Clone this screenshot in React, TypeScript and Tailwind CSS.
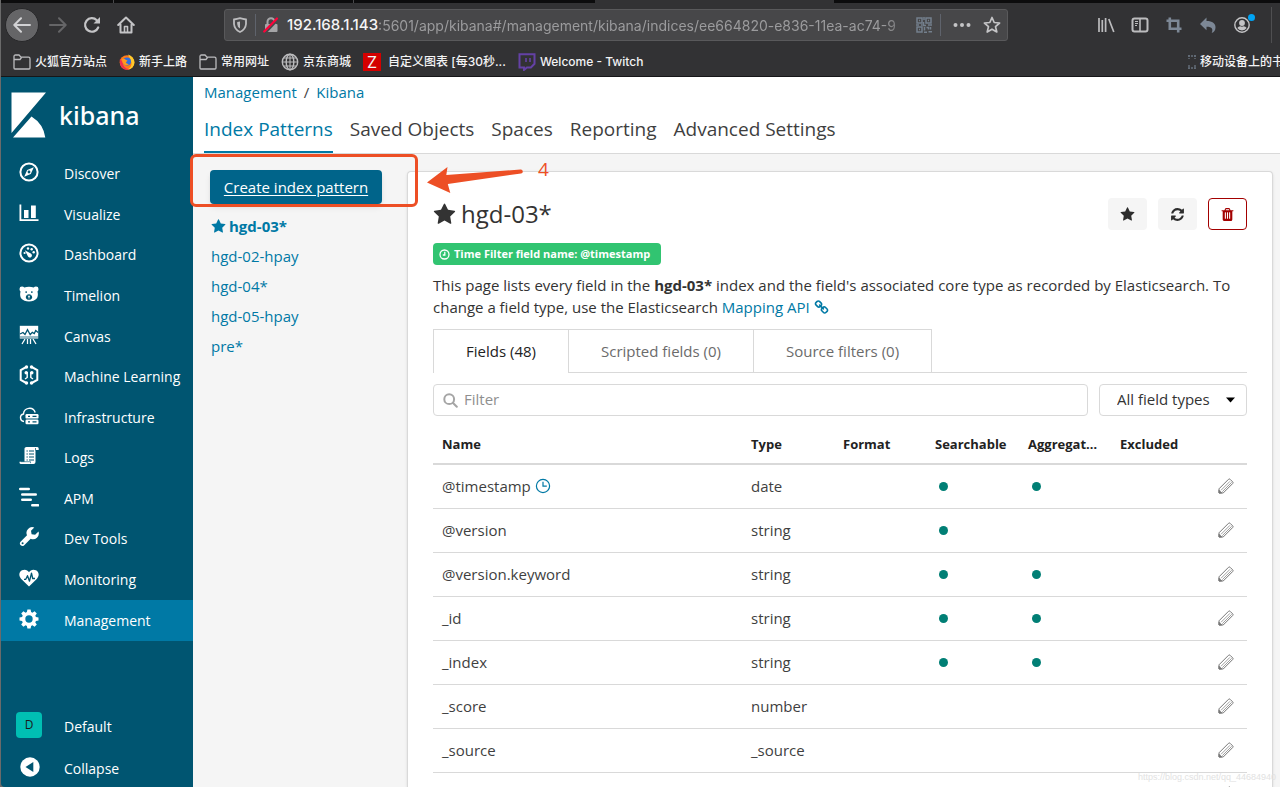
import type { ReactNode } from 'react'

interface Field {
  name: string
  type: string
  searchable?: boolean
  aggregatable?: boolean
  time?: boolean
}

const FIELDS: Field[] = [
  { name: '@timestamp', type: 'date', searchable: true, aggregatable: true, time: true },
  { name: '@version', type: 'string', searchable: true },
  { name: '@version.keyword', type: 'string', searchable: true, aggregatable: true },
  { name: '_id', type: 'string', searchable: true, aggregatable: true },
  { name: '_index', type: 'string', searchable: true, aggregatable: true },
  { name: '_score', type: 'number' },
  { name: '_source', type: '_source' },
  { name: '', type: '' },
]

const PATTERNS = ['hgd-02-hpay', 'hgd-04*', 'hgd-05-hpay', 'pre*']
const SECTIONS = ['Index Patterns', 'Saved Objects', 'Spaces', 'Reporting', 'Advanced Settings']
const TABS = ['Fields (48)', 'Scripted fields (0)', 'Source filters (0)']

// Font Awesome 4 glyphs, all on a 1792 grid
const FA = {
  star: 'M1728 647q0 22-26 48l-363 354 86 500q1 7 1 20 0 21-10.5 35.5t-30.5 14.5q-19 0-40-12l-449-236-449 236q-22 12-40 12-21 0-31.5-14.5t-10.5-35.5q0-6 2-20l86-500-364-354q-25-27-25-48 0-37 56-46l502-73 225-455q19-41 49-41t49 41l225 455 502 73q56 9 56 46z',
  refresh: 'M1639 1056q0 5-1 7-64 268-268 434.5t-478 166.5q-146 0-282.5-55t-243.5-157l-129 129q-19 19-45 19t-45-19-19-45v-448q0-26 19-45t45-19h448q26 0 45 19t19 45-19 45l-137 137q71 66 161 102t187 36q134 0 250-65t186-179q11-17 53-117 8-23 30-23h192q13 0 22.5 9.5t9.5 22.5zm25-800v448q0 26-19 45t-45 19h-448q-26 0-45-19t-19-45 19-45l138-138q-148-137-349-137-134 0-250 65t-186 179q-11 17-53 117-8 23-30 23h-199q-13 0-22.5-9.5t-9.5-22.5v-7q65-268 270-434.5t480-166.5q146 0 284 55.5t245 156.5l130-129q19-19 45-19t45 19 19 45z',
  trash: 'M704 1376v-704q0-14-9-23t-23-9h-64q-14 0-23 9t-9 23v704q0 14 9 23t23 9h64q14 0 23-9t9-23zm256 0v-704q0-14-9-23t-23-9h-64q-14 0-23 9t-9 23v704q0 14 9 23t23 9h64q14 0 23-9t9-23zm256 0v-704q0-14-9-23t-23-9h-64q-14 0-23 9t-9 23v704q0 14 9 23t23 9h64q14 0 23-9t9-23zm-544-992h448l-48-117q-7-9-17-11h-317q-10 2-17 11zm928 32v64q0 14-9 23t-23 9h-96v948q0 83-47 143.5t-113 60.5h-832q-66 0-113-58.5t-47-141.5v-952h-96q-14 0-23-9t-9-23v-64q0-14 9-23t23-9h309l70-167q15-37 54-63t79-26h320q40 0 79 26t54 63l70 167h309q14 0 23 9t9 23z',
  link: 'M1520 1216q0-40-28-68l-208-208q-28-28-68-28-42 0-72 32 3 3 19 18.5t21.5 21.5 15 19 13 25.5 3.5 27.5q0 40-28 68t-68 28q-15 0-27.5-3.5t-25.5-13-19-15-21.5-21.5-18.5-19q-33 31-33 73 0 40 28 68l206 207q27 27 68 27 40 0 68-26l147-146q28-28 28-67zm-703-705q0-40-28-68l-206-207q-28-28-68-28-39 0-68 27l-147 146q-28 28-28 67 0 40 28 68l208 208q27 27 68 27 42 0 72-31-3-3-19-18.5t-21.5-21.5-15-19-13-25.5-3.5-27.5q0-40 28-68t68-28q15 0 27.5 3.5t25.5 13 19 15 21.5 21.5 18.5 19q33-31 33-73zm895 705q0 120-85 203l-147 146q-83 83-203 83-121 0-204-85l-206-207q-83-83-83-203 0-123 88-209l-88-88q-86 88-208 88-120 0-204-84l-208-208q-84-84-84-204t85-203l147-146q83-83 203-83 121 0 204 85l206 207q83 83 83 203 0 123-88 209l88 88q86-88 208-88 120 0 204 84l208 208q84 84 84 204z',
}

function Fa({ d, className }: { d: string; className: string }) {
  return (
    <svg className={className} viewBox="0 0 1792 1792" fill="currentColor" aria-hidden="true">
      <path d={d} />
    </svg>
  )
}

function NavIcon({ children }: { children: ReactNode }) {
  return (
    <svg className="w-5 h-5 shrink-0 text-white" viewBox="0 0 20 20" fill="currentColor" aria-hidden="true">
      {children}
    </svg>
  )
}

const NAV: { label: string; icon: ReactNode }[] = [
  {
    label: 'Discover',
    icon: (
      <>
        <circle cx="10" cy="10" r="8.6" fill="none" stroke="currentColor" strokeWidth="2" />
        <path fillRule="evenodd" d="M14.8 5.2 11.8 12 5.2 14.8 8.2 8.1zM10 8.6a1.4 1.4 0 1 0 0 2.8 1.4 1.4 0 0 0 0-2.8z" />
      </>
    ),
  },
  { label: 'Visualize', icon: <path d="M.5 1.5h1.8V16.2h17.2V18H.5zM5 7h4.5v8H5zM12 2.5h4.8V15H12z" /> },
  {
    label: 'Dashboard',
    icon: (
      <>
        <circle cx="10" cy="10" r="8.6" fill="none" stroke="currentColor" strokeWidth="2" />
        <path d="M5.8 7.2 11.8 10.5a2.1 2.1 0 1 1-2.9 2.7z" />
        <circle cx="9" cy="5.5" r="1.2" />
        <circle cx="12.7" cy="6.3" r="1.2" />
        <circle cx="14.7" cy="9.2" r="1.2" />
        <circle cx="5.6" cy="10" r="1.1" />
      </>
    ),
  },
  {
    label: 'Timelion',
    icon: (
      <path
        fillRule="evenodd"
        d="M.5 5Q.5 2.6 3 2.6q1.400 0 2.300 1Q10 1.700 14.700 3.600q.9-1 2.300-1 2.500 0 2.500 2.400 0 1.600-1 2.500 1 4.500-.8 7Q15 17.500 10 17.500t-7.700-3q-1.800-2.500-.8-7-1-.9-1-2.500zM6.500 7.200v1.800h1.300V7.200zM12.200 7.200v1.800h1.300V7.200zM10 10.200c-2 0-3.200 1.500-3.200 3S8 15.800 10 15.800s3.200-1.100 3.200-2.600-1.200-3-3.200-3zM8.600 11.800h2.800L10.500 13v1.400h-1V13z"
      />
    ),
  },
  {
    label: 'Canvas',
    icon: (
      <>
        <path d="M.8.8h18.400v12.700H.8z" />
        <path d="m1 9 3-1.500 2 2 2.500-4.800 2.700 5 2.100-2.300 2 1.200 1.400-3 2.500 2" fill="none" stroke="#005571" strokeWidth="1.3" />
        <path d="M.8 12h18.400" stroke="#005571" strokeWidth=".8" />
        <path d="m6 14-3 5M8.500 14v5M11.500 14v5M14 14l3 5" fill="none" stroke="currentColor" strokeWidth="1.3" />
      </>
    ),
  },
  {
    label: 'Machine Learning',
    icon: (
      <>
        <path d="M7.300 2 1.700 5v10l5.600 3M12.700 2l5.600 3v10l-5.600 3" fill="none" stroke="currentColor" strokeWidth="2" />
        <path d="M8.200 7v5.500L6 14M11.800 7v5.500L14 14" fill="none" stroke="currentColor" strokeWidth="1.4" />
        <circle cx="7.500" cy="2" r="1.700" />
        <circle cx="12.500" cy="2" r="1.700" />
        <circle cx="7.500" cy="18" r="1.700" />
        <circle cx="12.500" cy="18" r="1.700" />
        <circle cx="7.200" cy="7.800" r="1.700" />
        <circle cx="12.800" cy="7.800" r="1.700" />
      </>
    ),
  },
  {
    label: 'Infrastructure',
    icon: (
      <>
        <path d="M5 15.500a3.800 3.800 0 0 1-.5-7.500 6 6 0 0 1 11.700-1.500" fill="none" stroke="currentColor" strokeWidth="1.4" />
        <rect x="6.500" y="8" width="13" height="4.600" rx="1.200" />
        <rect x="6.500" y="13.600" width="13" height="4.600" rx="1.200" />
        <path d="M9 10.300h2M13.500 10.300h4M9 15.900h2M13.500 15.900h4" stroke="#005571" strokeWidth="1.2" />
      </>
    ),
  },
  {
    label: 'Logs',
    icon: (
      <>
        <path d="M5.500 2.500Q5.500 1 7.500 1h10.800q1.400 0 1.400 1.500V4h-3.200v12q0 2-2 2H2.200Q.5 18 .5 16.500V15.800h5z" />
        <path d="M7.500 5h1.300M10 5h5M7.500 8h1.300M10 8h5M7.500 11h1.300M10 11h5M7.500 14h1.300M10 14h5" stroke="#005571" strokeWidth="1" />
        <path d="M16.500 2v2.500" stroke="#005571" strokeWidth=".7" />
        <path d="M2 15.700h9.500v1.500" fill="none" stroke="#005571" strokeWidth=".6" />
      </>
    ),
  },
  {
    label: 'APM',
    icon: (
      <path d="M1.300 2h8.400M3.300 7.500h13.400M3.300 12.800h8.400M13.300 18.200h5.700" fill="none" stroke="currentColor" strokeWidth="2.6" strokeLinecap="round" />
    ),
  },
  {
    label: 'Dev Tools',
    icon: (
      <path
        fillRule="evenodd"
        d="M19.500 4.500a5.800 5.800 0 0 1-7.800 7.200L5 18.500A2.600 2.600 0 0 1 1.300 15L8 8.300A5.800 5.800 0 0 1 15.300.5L12 3.800l.6 3.500 3.500.5zM2.600 16.200a1 1 0 1 0 2 0 1 1 0 0 0-2 0z"
      />
    ),
  },
  {
    label: 'Monitoring',
    icon: (
      <>
        <path d="M10 18.500 2 10.700C-.8 7.500.2 3.500 3 2.300 6 1 8.600 2 10 4.200 11.400 2 14 1 17 2.300c2.800 1.200 3.800 5.200 1 8.400z" />
        <path d="M5 11.300h1.800l1.700-3.600 2 5.500 2-8 1.200 5.300H16" fill="none" stroke="#005571" strokeWidth="1.3" strokeLinejoin="round" />
      </>
    ),
  },
  {
    label: 'Management',
    icon: (
      <path
        fillRule="evenodd"
        d="m8.400.5h3.200l.5 2.600 1.300.6L15.600 2.200 17.800 4.400 16.300 6.600l.6 1.300 2.600.5v3.200l-2.600.5-.6 1.300 1.500 2.200-2.200 2.200-2.200-1.500-1.300.6-.5 2.600H8.400l-.5-2.600-1.300-.6-2.200 1.500-2.200-2.200 1.500-2.200-.6-1.300-2.600-.5V8.400l2.600-.5.6-1.300L2.200 4.400 4.400 2.200l2.200 1.500 1.300-.6zM10 6.300a3.700 3.700 0 1 0 0 7.400 3.700 3.700 0 0 0 0-7.400z"
      />
    ),
  },
]

function FolderIcon() {
  return (
    <svg className="w-[18px] h-4 shrink-0" viewBox="0 0 18 16" fill="none" stroke="#bcbcbe" strokeWidth="1.3" aria-hidden="true">
      <path d="M1 14V2.500Q1 1 2.500 1H6l2 2.200h7.500Q17 3.200 17 4.700V14q0 1-1 1H2q-1 0-1-1zM1 5.500h6l1.500-2" />
    </svg>
  )
}

function FirefoxIcon() {
  return (
    <svg className="w-4 h-4 shrink-0" viewBox="0 0 16 16" aria-hidden="true">
      <circle cx="8" cy="8.500" r="7.300" fill="#ff7a1a" />
      <path d="M9 .5q6 2 6.500 8a7.400 7.400 0 0 1-7 7.300Q13 13 12.500 8.500 11 4 9 .5z" fill="#ffca2b" />
      <path d="M1 4.500Q0 12 4.500 14.800q3.500 1.500 6 .5Q4 14.500 3.500 8z" fill="#f0304f" />
      <circle cx="8" cy="7.500" r="4" fill="#2f6fe0" />
      <path d="M3 5q2.500-.6 4 1l1.500.4q-.2 1.400-1.700 1.600Q7 10 10 10.300 7 12.500 4.500 10 3 8 3 5z" fill="#ff9a1e" />
    </svg>
  )
}

function GlobeIcon() {
  return (
    <svg className="w-[18px] h-[18px] shrink-0" viewBox="0 0 18 18" fill="none" stroke="#bcbcbe" strokeWidth="1.4" aria-hidden="true">
      <circle cx="9" cy="9" r="7.700" />
      <ellipse cx="9" cy="9" rx="3.800" ry="7.700" />
      <path d="M1.300 9h15.400M2.600 5h12.800M2.600 13h12.800M9 1.300v15.400" strokeWidth="1.1" />
    </svg>
  )
}

function TwitchIcon() {
  return (
    <svg className="w-[18px] h-[18px] shrink-0" viewBox="0 0 18 18" fill="none" stroke="#6441a5" aria-hidden="true">
      <path d="M1.500 1.200h15v9.600l-3.600 3.700h-4L6 17v-2.500H1.500z" strokeWidth="2" />
      <path d="M8 5v4M12 5v4" strokeWidth="1.6" />
    </svg>
  )
}

function AddressBar() {
  return (
    <div className="flex h-8 min-w-0 flex-1 items-center rounded-[3px] border border-[#59595b] bg-[#474749] pl-[7px] pr-1.5">
      <button aria-label="Tracking protection">
        <svg className="w-4 h-4" viewBox="0 0 16 16" fill="none" stroke="#bcbcbe" aria-hidden="true">
          <path d="M8 1.200Q11 2 14 2.500v4.500Q13.500 12.500 8 15 2.500 12.500 2 7V2.500Q5 2 8 1.200z" strokeWidth="1.8" />
          <path d="M8 4.500v7Q5.300 10 5.200 7V5z" fill="#bcbcbe" stroke="none" />
        </svg>
      </button>
      <span className="mx-[7px] h-[22px] w-px bg-[#5f636c]" />
      <button aria-label="Site security">
        <svg className="w-4 h-4" viewBox="0 0 16 16" aria-hidden="true">
          <path d="M4.500 7V4.800a3.500 3.500 0 0 1 7 0V7" fill="none" stroke="#a5a5a7" strokeWidth="2" />
          <rect x="2" y="7" width="12.500" height="8" rx="1" fill="#a5a5a7" />
          <path d="M2.500 15.800 15.500 2" stroke="#474749" strokeWidth="2.2" />
          <path d="M1.200 14.500 14 1.500" stroke="#ff0039" strokeWidth="2.2" strokeLinecap="round" />
        </svg>
      </button>
      <label htmlFor="url" className="ml-2 pt-0.5 text-[15px] font-medium text-[#f5f5f6]">192.168.1.143</label>
      <input
        id="url"
        type="text"
        defaultValue=":5601/app/kibana#/management/kibana/indices/ee664820-e836-11ea-ac74-9"
        className="min-w-0 flex-1 bg-transparent pt-0.5 text-[14px] text-[#9b9b9d] outline-none [mask-image:linear-gradient(to_right,black_94%,transparent)]"
      />
      <button aria-label="QR code">
        <svg className="w-4 h-4" viewBox="0 0 16 16" fill="none" stroke="#74808d" strokeWidth="1.5" aria-hidden="true">
          <path d="M1 1h5v5H1zM10 1h5v5h-5zM1 10h5v5H1z" />
          <path d="M3 3.500h1M12 3.500h1M3 12.500h1M8 0v3M7.500 5v3.500H10M0 8h3M5 8h1.500M12 8h4M8.500 10v3.500M8 15.200h3M10.500 10.500h2v2M14.500 10v2.500M12.500 14.800H16" />
        </svg>
      </button>
      <span className="ml-2 mr-3 h-[22px] w-px bg-[#5f636c]" />
      <button aria-label="Page actions">
        <svg className="w-[18px] h-4" viewBox="0 0 18 16" fill="#c4c4c6" aria-hidden="true">
          <circle cx="2.500" cy="8" r="2" />
          <circle cx="9" cy="8" r="2" />
          <circle cx="15.500" cy="8" r="2" />
        </svg>
      </button>
      <button aria-label="Bookmark this page" className="ml-3">
        <svg className="w-[18px] h-[18px]" viewBox="0 0 18 18" fill="none" stroke="#c4c4c6" strokeWidth="1.7" strokeLinejoin="round" aria-hidden="true">
          <path d="m9 1.500 2.200 5 5.400.5-4.100 3.600 1.300 5.400L9 13.200 4.200 16l1.300-5.400L1.400 7l5.400-.5z" />
        </svg>
      </button>
    </div>
  )
}

function Browser() {
  return (
    <header className="shrink-0 border-b border-[#161618] bg-[#323234] font-[Inter,'Noto_Sans_CJK_SC',sans-serif]">
      <div className="flex h-[3px] bg-[#0c0c0d]">
        <span className="w-[113px] border-r border-[#4a4a4c]" />
        <span className="w-[240px] border-r border-[#4a4a4c]" />
        <span className="w-[241px]" />
        <span className="w-[239px] bg-[#323234]" />
      </div>
      <div className="flex h-[43px] items-center">
        <div className="flex w-[223px] shrink-0 items-center">
          <button aria-label="Back" className="ml-1 flex h-[34px] w-[34px] items-center justify-center rounded-full border border-[#28282a] bg-[#656567]">
            <svg className="w-[18px] h-[18px]" viewBox="0 0 18 18" fill="none" stroke="#d2d2d4" strokeWidth="2" strokeLinecap="round" strokeLinejoin="round" aria-hidden="true">
              <path d="M17 9H1.500M8 2.300 1.300 9 8 15.700" />
            </svg>
          </button>
          <button aria-label="Forward" className="ml-[10px]">
            <svg className="w-[18px] h-[18px]" viewBox="0 0 18 18" fill="none" stroke="#656567" strokeWidth="2" strokeLinecap="round" strokeLinejoin="round" aria-hidden="true">
              <path d="M1 9h15.500M10 2.300 16.700 9 10 15.700" />
            </svg>
          </button>
          <button aria-label="Reload" className="ml-4">
            <svg className="w-[18px] h-[18px]" viewBox="0 0 18 18" fill="none" stroke="#c4c4c6" strokeWidth="2.2" strokeLinecap="round" aria-hidden="true">
              <path d="M15.200 11.500A6.800 6.800 0 1 1 13.800 4.200" />
              <path d="M17 1v6.500h-6.500z" fill="#c4c4c6" stroke="none" />
            </svg>
          </button>
          <button aria-label="Home" className="ml-4">
            <svg className="w-[18px] h-[18px]" viewBox="0 0 18 18" fill="none" stroke="#c4c4c6" strokeWidth="2" strokeLinecap="round" strokeLinejoin="round" aria-hidden="true">
              <path d="M1.200 9 9 1.500 16.800 9M3.500 8.500v8h11v-8" />
              <path d="M7.500 16v-5.500h3V16" strokeWidth="1.6" />
            </svg>
          </button>
        </div>
        <AddressBar />
        <div className="flex w-[272px] shrink-0 items-center justify-end">
          <button aria-label="Library">
            <svg className="w-[18px] h-[18px]" viewBox="0 0 18 18" fill="none" stroke="#bcbcbe" strokeWidth="1.7" aria-hidden="true">
              <path d="M2 2v14M5.300 4v12M8.600 2v14M11.800 3l5 13" />
            </svg>
          </button>
          <button aria-label="Sidebars" className="ml-4">
            <svg className="w-[18px] h-[18px]" viewBox="0 0 18 18" fill="none" stroke="#bcbcbe" aria-hidden="true">
              <rect x="1.500" y="2.500" width="15" height="13" rx="2" strokeWidth="2" />
              <path d="M9 3v12" strokeWidth="1.6" />
              <path d="M4 5.500h3M4 7.500h3M4 9.500h2" strokeWidth="1" />
            </svg>
          </button>
          <button aria-label="Screenshot" className="ml-4">
            <svg className="w-[18px] h-[18px]" viewBox="0 0 18 18" fill="none" stroke="#7d8896" strokeWidth="2.6" aria-hidden="true">
              <path d="M4.800 1.500v11.200H16.500M1.500 4.800h11.700V16.500" />
            </svg>
          </button>
          <button aria-label="Undo" className="ml-4">
            <svg className="w-[18px] h-[18px]" viewBox="0 0 18 18" fill="#7d8896" aria-hidden="true">
              <path d="M7.500 1.500v3.600c6 0 9 2.600 9 6.400 0 2.800-1.500 4.700-3.800 5.500 1.500-3.800.8-6.300-5.200-6.300v3.600L1 7.900z" />
            </svg>
          </button>
          <button aria-label="Account" className="relative ml-4 mr-5">
            <svg className="w-[18px] h-[18px]" viewBox="0 0 18 18" fill="#c4c4c6" aria-hidden="true">
              <circle cx="9" cy="9" r="7.200" fill="none" stroke="#c4c4c6" strokeWidth="1.4" />
              <circle cx="9" cy="7" r="2.900" />
              <path d="M4.300 12q1.200-1.600 3-1.700 1.700.8 3.400 0 1.800.1 3 1.700-1.500 2.300-4.700 2.400-3.200-.1-4.700-2.400z" />
            </svg>
            <span className="absolute -right-1 -top-0.5 h-[7px] w-[7px] rounded-full bg-[#00a4f5]" />
          </button>
          <span className="mr-2 h-9 w-px bg-[#4f4f51]" />
        </div>
      </div>
      <nav className="flex h-[30px] items-center overflow-hidden whitespace-nowrap pl-3 pt-px text-xs font-medium text-[#f3f3f4]">
        <a href="#" className="flex items-center gap-1"><FolderIcon />火狐官方站点</a>
        <a href="#" className="ml-3 flex items-center gap-1"><FirefoxIcon />新手上路</a>
        <a href="#" className="ml-3 flex items-center gap-1"><FolderIcon />常用网址</a>
        <a href="#" className="ml-3 flex items-center gap-1"><GlobeIcon />京东商城</a>
        <a href="#" className="ml-3 flex items-center gap-[7px]">
          <span className="flex h-[18px] w-[18px] items-center justify-center bg-[#d40000] text-base font-normal">Z</span>
          自定义图表 [每30秒...
        </a>
        <a href="#" className="ml-3 flex items-center gap-1"><TwitchIcon />Welcome - Twitch</a>
        <a href="#" className="-mr-4 ml-auto flex items-center gap-1">
          <svg className="w-2 h-4" viewBox="0 0 8 16" fill="none" stroke="#66707c" strokeWidth="1.4" strokeDasharray="2 1" aria-hidden="true">
            <path d="M0 2h8M0 14h8M1 1v4M7 1v4M1 11v4M7 11v4" />
          </svg>
          移动设备上的书签
        </a>
      </nav>
    </header>
  )
}

function Sidebar() {
  return (
    <aside className="flex w-48 shrink-0 flex-col rounded-bl bg-[#005571] text-sm text-white">
      <a href="#" className="flex h-[77px] items-center gap-[13px] pb-0.5 pl-[10px]" aria-label="Kibana home">
        <svg className="h-[46px] w-[35px]" viewBox="0 0 35 46" fill="white" aria-hidden="true">
          <path d="M.5.5H35L.5 41zM2 45.500 20.500 24.500Q32.500 32 34.300 45.500z" />
        </svg>
        <span className="text-[25px] font-medium leading-9 font-['Noto_Sans',sans-serif]">kibana</span>
      </a>
      <nav className="flex h-[487px] flex-col">
        {NAV.map(item => (
          <a
            key={item.label}
            href="#"
            className={`flex flex-1 items-center gap-[25px] pl-[18px] ${item.label === 'Management' ? 'bg-[#0079a5]' : ''}`}
          >
            <span className="pb-1"><NavIcon>{item.icon}</NavIcon></span>
            {item.label}
          </a>
        ))}
      </nav>
      <a href="#" className="mt-auto flex h-12 items-center gap-[22px] pl-[15px]">
        <span className="mb-1 flex h-[26px] w-[26px] items-center justify-center rounded bg-[#00bfb3] text-xs text-[#1a1a1a]">D</span>
        Default
      </a>
      <button className="flex h-9 items-center gap-6 pl-[19px] text-left">
        <span className="pb-1">
          <NavIcon>
            <circle cx="10" cy="10" r="9.700" />
            <path d="M13.300 5v10L5.500 10z" fill="#005571" />
          </NavIcon>
        </span>
        Collapse
      </button>
    </aside>
  )
}

function PencilIcon() {
  return (
    <svg className="w-4 h-4" viewBox="0 0 16 16" fill="none" stroke="#777" strokeWidth="1" strokeLinejoin="round" aria-hidden="true">
      <path d="M1 10.800 10.500 1.300q.8-.8 1.600 0l2.600 2.600q.8.8 0 1.600L5.200 15H1z" />
      <path d="M3 12.300 12 3.300M4.300 13.700 13.700 4.300" strokeWidth=".7" />
      <path d="M1 12.300 3.700 15H1z" fill="#777" />
    </svg>
  )
}

function Dot({ label }: { label: string }) {
  return <span role="img" aria-label={label} className="ml-1 block h-[9px] w-[9px] rounded-full bg-[#017f75]" />
}

function FieldTable() {
  return (
    <table className="mt-[9px] w-full table-fixed text-left text-[15px] text-[#3f3f3f]">
      <thead>
        <tr className="h-[39px] border-b-2 border-[#d9d9d9] text-[13px] text-[#222]">
          <th className="px-[9px] pt-0.5">Name</th>
          <th className="w-[92px] px-[9px] pt-0.5">Type</th>
          <th className="w-[92px] px-[9px] pt-0.5">Format</th>
          <th className="w-[93px] px-[9px] pt-0.5">Searchable</th>
          <th className="w-[92px] truncate px-[9px] pt-0.5">Aggregatable</th>
          <th className="w-[93px] px-[9px] pt-0.5">Excluded</th>
          <th className="w-[43px]" aria-label="Actions" />
        </tr>
      </thead>
      <tbody>
        {FIELDS.map(field => (
          <tr key={field.name} className="h-11 border-b border-[#d9d9d9]">
            <td className="px-[9px]">
              <span className="flex items-center gap-1">
                {field.name}
                {field.time && (
                  <svg className="w-4 h-4" viewBox="0 0 16 16" fill="none" stroke="#0079a5" strokeWidth="1.2" aria-label="Time field">
                    <circle cx="8" cy="8" r="6.600" />
                    <path d="M8 3.800V8.200h3.800" />
                  </svg>
                )}
              </span>
            </td>
            <td className="px-[9px]">{field.type}</td>
            <td />
            <td className="px-[9px]">{field.searchable && <Dot label="Searchable" />}</td>
            <td className="px-[9px]">{field.aggregatable && <Dot label="Aggregatable" />}</td>
            <td />
            <td>
              <button aria-label={`Edit ${field.name}`} className="ml-[14px] block"><PencilIcon /></button>
            </td>
          </tr>
        ))}
      </tbody>
    </table>
  )
}

function IndexPattern() {
  return (
    <section className="mr-[7px] mt-[17px] min-w-0 flex-1 rounded-t border border-b-0 border-[#d9d9d9] bg-white px-[25px] pt-6 text-[#333] shadow-sm">
      <div className="flex items-start justify-between">
        <h1 className="flex h-9 items-center gap-[5px] text-2xl">
          <Fa d={FA.star} className="w-[23px] h-[23px]" />
          hgd-03*
        </h1>
        <div className="flex gap-[11px] pt-0.5">
          <button aria-label="Set as default index" className="flex h-8 w-[39px] items-center justify-center rounded bg-[#f5f5f5] text-[#2d2d2d]">
            <Fa d={FA.star} className="w-[15px] h-[15px]" />
          </button>
          <button aria-label="Refresh field list" className="flex h-8 w-[39px] items-center justify-center rounded bg-[#f5f5f5] text-[#2d2d2d]">
            <Fa d={FA.refresh} className="w-[15px] h-[15px]" />
          </button>
          <button aria-label="Remove index pattern" className="flex h-8 w-[39px] items-center justify-center rounded border border-[#a30000] text-[#a30000]">
            <Fa d={FA.trash} className="w-[15px] h-[15px]" />
          </button>
        </div>
      </div>
      <p className="mt-[11px] flex h-[22px] w-fit items-center gap-1 rounded-sm bg-[#31c471] pl-[6px] pr-[11px] text-[11px] font-bold text-white">
        <svg className="w-[11px] h-[11px]" viewBox="0 0 11 11" fill="none" stroke="currentColor" strokeWidth="1.3" aria-hidden="true">
          <circle cx="5.500" cy="5.500" r="4.500" />
          <path d="M5.800 2.800V6H3.800" />
        </svg>
        Time Filter field name: @timestamp
      </p>
      <p className="mt-[9px] text-[15px] leading-[22px]">
        This page lists every field in the <b>hgd-03*</b> index and the field's associated core type as recorded by Elasticsearch. To change a field type, use the Elasticsearch{' '}
        <a href="#" className="text-[#0079a5]">
          Mapping API <Fa d={FA.link} className="inline w-[15px] h-[15px] align-[-2px]" />
        </a>
      </p>
      <div role="tablist" className="mt-[11px] flex h-11 text-[15px]">
        {TABS.map((tab, i) => (
          <button
            key={tab}
            role="tab"
            aria-selected={i === 0}
            className={`border-r border-t border-[#d9d9d9] px-8 ${i === 0 ? 'border-l text-[#222]' : 'border-b text-[#6b6b6b]'}`}
          >
            {tab}
          </button>
        ))}
        <span className="flex-1 border-b border-[#d9d9d9]" />
      </div>
      <div className="mt-[11px] flex gap-[11px] text-[15px]">
        <label className="flex h-8 flex-1 items-center gap-[6px] rounded border border-[#d9d9d9] pl-[9px] text-[#a5a5a5]">
          <svg className="w-[15px] h-[15px]" viewBox="0 0 15 15" fill="none" stroke="currentColor" strokeWidth="2" strokeLinecap="round" aria-hidden="true">
            <circle cx="6.200" cy="6.200" r="4.900" />
            <path d="m10 10 3.800 3.800" />
          </svg>
          <input type="text" aria-label="Filter" placeholder="Filter" className="min-w-0 flex-1 bg-transparent pb-0.5 outline-none placeholder:text-[#8f8f8f]" />
        </label>
        <div className="relative">
          <select aria-label="Field types" className="h-8 w-[148px] appearance-none rounded border border-[#d9d9d9] bg-white pb-0.5 pl-[17px] text-[#333] outline-none">
            <option>All field types</option>
          </select>
          <svg className="pointer-events-none absolute right-3 top-[13px] h-[6px] w-[9px]" viewBox="0 0 9 6" aria-hidden="true">
            <path d="M0 .5h9L4.500 5.500z" fill="#000" />
          </svg>
        </div>
      </div>
      <FieldTable />
    </section>
  )
}

// Red hand-drawn style callout around the create button
function Callout() {
  return (
    <div className="pointer-events-none absolute -left-[3px] top-0 text-[#ed4f25]">
      <div className="h-[53px] w-[228px] rounded-md border-[3px] border-current" />
      <svg className="absolute left-[237px] top-3 h-7 w-[97px]" viewBox="0 0 97 28" fill="currentColor" aria-hidden="true">
        <path d="M0 16.500 20.500 1 19.300 9 93.500 3.500a2 2 0 0 1 .5 4L20.800 18l2.500 9z" />
      </svg>
      <span className="absolute left-[348px] top-0.5 text-[19px] leading-[26px]">4</span>
    </div>
  )
}

export default function App() {
  return (
    <div className="relative flex h-screen flex-col overflow-hidden bg-[#6a6a6a] pl-px font-['Open_Sans',sans-serif]">
      <Browser />
      <div className="flex min-h-0 flex-1">
        <Sidebar />
        <main className="flex min-w-0 flex-1 flex-col bg-[#f5f5f5]">
          <div className="h-[77px] shrink-0 border-b border-[#d9d9d9] bg-white pl-[11px]">
            <nav aria-label="Breadcrumb" className="flex h-[31px] items-center gap-[7px] text-[15px] text-[#3f3f3f]">
              <a href="#" className="text-[#0079a5]">Management</a>
              <span>/</span>
              <a href="#" className="text-[#0079a5]">Kibana</a>
            </nav>
            <nav className="flex h-[45px] gap-[17px] text-[19px] text-[#3f3f3f]">
              {SECTIONS.map((section, i) => (
                <a
                  key={section}
                  href="#"
                  className={`pt-[7px] ${i === 0 ? 'border-b-2 border-[#0079a5] text-[#0079a5]' : ''}`}
                >
                  {section}
                </a>
              ))}
            </nav>
          </div>
          <div className="relative flex min-h-0 flex-1">
            <div className="w-[214px] shrink-0 pl-[17px] pt-4 text-[15px]">
              <a href="#" className="flex h-[34px] w-[172px] items-center justify-center rounded bg-[#00648a] text-white underline underline-offset-2 shadow-md">
                Create index pattern
              </a>
              <ul className="mt-[7px] pl-px text-[#0079a5]">
                <li>
                  <a href="#" className="flex h-[30px] items-center gap-[3px] font-bold">
                    <Fa d={FA.star} className="w-[15px] h-[15px]" />
                    hgd-03*
                  </a>
                </li>
                {PATTERNS.map(name => (
                  <li key={name}>
                    <a href="#" className="flex h-[30px] items-center">{name}</a>
                  </li>
                ))}
              </ul>
            </div>
            <IndexPattern />
            <Callout />
          </div>
        </main>
      </div>
      <span className="pointer-events-none absolute bottom-1 right-1 text-[9px] leading-3 text-[#e2e2e2] font-['Liberation_Sans',sans-serif]">
        https://blog.csdn.net/qq_44684940
      </span>
    </div>
  )
}
